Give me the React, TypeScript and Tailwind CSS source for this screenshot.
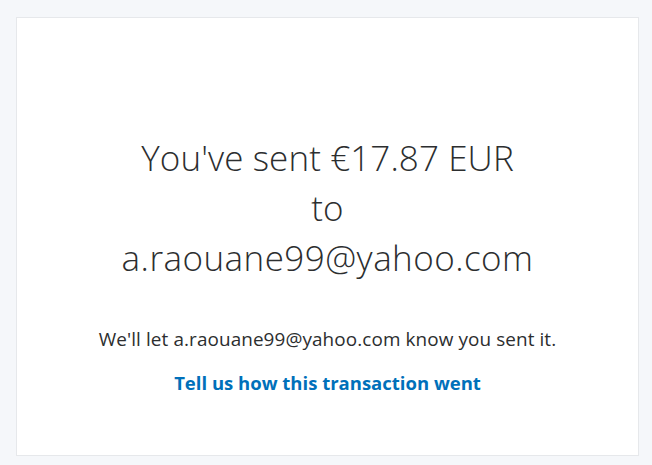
export default function App() {
  return (
    <div className="min-h-[465px] w-full bg-[#f5f7fa] pt-[17px] pl-[16px] pr-[13px] pb-[9px]" style={{ fontFamily: '"Open Sans", sans-serif' }}>
      <div className="h-[439px] border border-[#e6e8eb] bg-white flex flex-col items-center pt-[115px]">
        <h1 className="text-center text-[35px] leading-[50px] font-light text-[#2c2e2f] tracking-[0.1px]">
          You've sent €17.87 EUR
          <br />
          to
          <br />
          <span className="tracking-[0.45px]">a.raouane99@yahoo.com</span>
        </h1>
        <p className="mt-[44px] text-[18.9px] leading-[24px] text-[#2c2e2f] tracking-[0.1px]">
          We'll let a.raouane99@yahoo.com know you sent it.
        </p>
        <a className="mt-[20px] text-[18.5px] leading-[24px] font-bold text-[#0070ba]" href="#">
          Tell us how this transaction went
        </a>
      </div>
    </div>
  );
}
